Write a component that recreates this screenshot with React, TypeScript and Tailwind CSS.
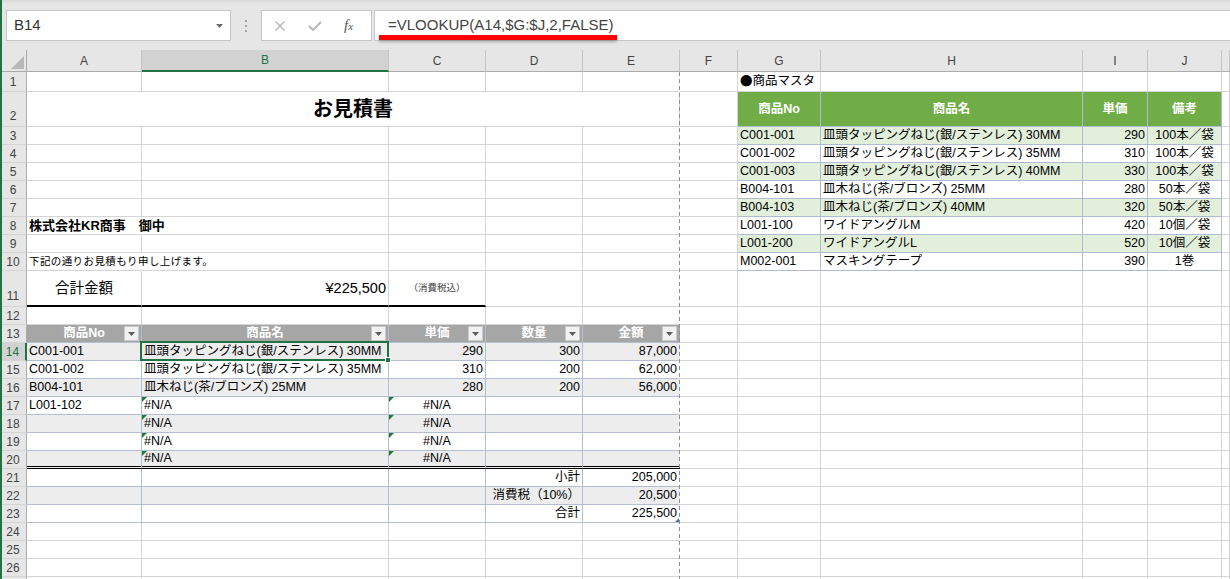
import type { ReactNode } from 'react'

const quoteHead = ['商品No', '商品名', '単価', '数量', '金額']
const quoteRows = [
  ['C001-001', '皿頭タッピングねじ(銀/ステンレス) 30MM', '290', '300', '87,000'],
  ['C001-002', '皿頭タッピングねじ(銀/ステンレス) 35MM', '310', '200', '62,000'],
  ['B004-101', '皿木ねじ(茶/ブロンズ) 25MM', '280', '200', '56,000'],
  ['L001-102', '#N/A', '#N/A', '', ''],
  ['', '#N/A', '#N/A', '', ''],
  ['', '#N/A', '#N/A', '', ''],
  ['', '#N/A', '#N/A', '', ''],
]
const totals = [
  ['小計', '205,000'],
  ['消費税（10%）', '20,500'],
  ['合計', '225,500'],
]
const masterHead = ['商品No', '商品名', '単価', '備考']
const masterRows = [
  ['C001-001', '皿頭タッピングねじ(銀/ステンレス) 30MM', '290', '100本／袋'],
  ['C001-002', '皿頭タッピングねじ(銀/ステンレス) 35MM', '310', '100本／袋'],
  ['C001-003', '皿頭タッピングねじ(銀/ステンレス) 40MM', '330', '100本／袋'],
  ['B004-101', '皿木ねじ(茶/ブロンズ) 25MM', '280', '50本／袋'],
  ['B004-103', '皿木ねじ(茶/ブロンズ) 40MM', '320', '50本／袋'],
  ['L001-100', 'ワイドアングルM', '420', '10個／袋'],
  ['L001-200', 'ワイドアングルL', '520', '10個／袋'],
  ['M002-001', 'マスキングテープ', '390', '1巻'],
]
const letters = ['A', 'B', 'C', 'D', 'E', 'F', 'G', 'H', 'I', 'J', '']

const rowHeight = (r: number) =>
  r === 1 ? 'h-[20px]' : r === 2 ? 'h-[35px]' : r === 11 ? 'h-[36px]' : 'h-[18px]'

type Spec = {
  text?: ReactNode
  cls: string
  extra?: ReactNode
  skip?: boolean
}

function ErrorMark() {
  return (
    <svg className="absolute left-0 top-0" width="5" height="5">
      <polygon points="0,0 5,0 0,5" fill="#1f7a3a" />
    </svg>
  )
}

function FilterButton() {
  return (
    <div className="absolute right-[2px] top-[1px] flex h-[15px] w-[15px] items-center justify-center border border-[#c9c9c9] bg-[#f2f2f2]">
      <svg width="7" height="4">
        <polygon points="0,0 7,0 3.5,4" fill="#5f5f5f" />
      </svg>
    </div>
  )
}

function Selection() {
  return (
    <div className="absolute -left-[2px] -top-[2px] -right-[1px] -bottom-[1px] z-10 border-2 border-[#217346]">
      <div className="absolute -right-[4px] -bottom-[4px] h-[6px] w-[6px] border border-white bg-[#217346]" />
    </div>
  )
}

function spec(r: number, c: number): Spec {
  let color = 'border-[#d4d4d4]'
  let bw = 'border-b'
  let extraCls = ''
  let bg = ''
  let align = 'justify-start'
  let font = ''
  let text: ReactNode = null
  let extra: ReactNode = null
  let span = ''

  if (r === 2 && c >= 1 && c <= 4) return { cls: '', skip: true }

  if (r === 1 && c === 6)
    text = (
      <>
        <span className="[font-family:'Noto_Sans_CJK_JP',sans-serif]">●</span>商品マスタ
      </>
    )
  if (r === 2 && c === 0) {
    span = 'col-span-5'
    text = 'お見積書'
    font = 'text-[20px] font-bold'
    align = 'justify-center'
  }
  if (r === 8 && c === 0) {
    text = '株式会社KR商事　御中'
    font = 'text-[13px] font-bold'
    extraCls += ' border-r-transparent'
  }
  if (r === 10 && c === 0) {
    text = '下記の通りお見積もり申し上げます。'
    font = 'text-[10.5px] tracking-[0.4px]'
    extraCls += ' border-r-transparent'
  }
  if (r === 11 && c <= 2) {
    bw = 'border-b-2'
    extraCls += ' border-b-black'
    if (c === 0) {
      text = '合計金額'
      font = 'text-[14.5px]'
      align = 'justify-center'
    }
    if (c === 1) {
      text = '¥225,500'
      font = 'text-[14.5px]'
      align = 'justify-end'
    }
    if (c === 2) {
      text = '（消費税込）'
      font = 'text-[9.5px] text-[#444]'
      align = 'justify-center'
    }
  }

  // quotation table
  if (r >= 13 && r <= 23 && c <= 4) {
    color = 'border-[#b3bfd1]'
    if (r === 13) {
      bg = 'bg-[#a6a6a6]'
      font = 'font-bold text-white'
      align = 'justify-center'
      text = quoteHead[c]
      extra = <FilterButton />
    } else if (r <= 20) {
      const v = quoteRows[r - 14][c]
      text = v
      if (r % 2 === 0) bg = 'bg-[#ededed]'
      if (c >= 2) align = v === '#N/A' ? 'justify-center' : 'justify-end'
      if (v === '#N/A') extra = <ErrorMark />
      if (r === 14 && c === 1) extra = <Selection />
      if (r === 20) {
        bw = 'border-b-[3px]'
        extraCls += ' border-double border-b-black'
      }
    } else {
      if (r === 22) bg = 'bg-[#ededed]'
      if (c >= 3) {
        text = totals[r - 21][c - 3]
        align = 'justify-end'
      }
      if (r === 23 && c === 4)
        extra = (
          <svg className="absolute right-0 bottom-0" width="4" height="4">
            <polygon points="4,0 4,4 0,4" fill="#4a6fc0" />
          </svg>
        )
    }
  }

  // product master
  if (r >= 2 && r <= 10 && c >= 6 && c <= 9) {
    color = 'border-[#aebbd0]'
    if (r === 2) {
      bg = 'bg-[#70ad47]'
      font = 'font-bold text-white'
      align = 'justify-center'
      text = masterHead[c - 6]
    } else {
      if (r % 2 === 1) bg = 'bg-[#e2efda]'
      text = masterRows[r - 3][c - 6]
      if (c === 8) align = 'justify-end'
      if (c === 9) align = 'justify-center'
    }
  }

  // page break line sits on the E/F boundary
  if (c === 4) extraCls += ' border-r-transparent'

  return {
    text,
    extra,
    cls: `${span} border-r ${bw} ${color} ${bg} ${align} ${font} ${extraCls}`,
  }
}

function FormulaBar() {
  return (
    <div className="relative h-[50px] bg-[linear-gradient(#d9d9d9,#e6e6e6_4px)]">
      <div className="flex items-start pt-[10px]">
        <div className="ml-[6px] flex h-[31px] w-[225px] items-center justify-between border border-[#c6c6c6] bg-white pl-[7px] pr-[7px]">
          <span className="text-[15px] text-[#333]">B14</span>
          <svg width="7" height="4">
            <polygon points="0,0 7,0 3.5,4" fill="#6d6d6d" />
          </svg>
        </div>
        <div className="flex h-[31px] w-[30px] flex-col items-center justify-center gap-[3px]">
          <span className="h-[2px] w-[2px] bg-[#a3a3a3]" />
          <span className="h-[2px] w-[2px] bg-[#a3a3a3]" />
          <span className="h-[2px] w-[2px] bg-[#a3a3a3]" />
        </div>
        <div className="flex h-[31px] w-[111px] items-center border border-[#c6c6c6] bg-white">
          <svg className="ml-[13px]" width="10" height="10">
            <path d="M0.5 0.5 L9.5 9.5 M9.5 0.5 L0.5 9.5" stroke="#b5b5b5" strokeWidth="1.3" />
          </svg>
          <svg className="ml-[23px]" width="14" height="10">
            <polyline points="1,5 5,9 13,1" fill="none" stroke="#b5b5b5" strokeWidth="1.8" />
          </svg>
          <span className="ml-[22px] text-[15px] italic text-[#555] [font-family:'Liberation_Serif',serif]">
            f<span className="text-[11px]">x</span>
          </span>
        </div>
        <div className="ml-[2px] flex h-[31px] flex-1 items-center border border-r-0 border-[#c6c6c6] bg-white pl-[13px] text-[15px] text-[#444]">
          =VLOOKUP(A14,$G:$J,2,FALSE)
        </div>
      </div>
      <div className="absolute left-[379px] top-[35px] h-[5px] w-[238px] bg-[#ff0000] shadow-[0_2px_3px_rgba(0,0,0,0.25)]" />
    </div>
  )
}

function Row({ r }: { r: number }) {
  const h = rowHeight(r)
  const selected = r === 14
  const labelAlign = r === 2 || r === 11 ? 'items-end pb-[1px]' : 'items-center'
  return (
    <>
      <div
        className={`flex justify-center border-b border-b-[#d4d4d4] text-[12px] ${h} ${labelAlign} ${
          selected
            ? 'border-r-2 border-r-[#217346] bg-[#d2d2d2] text-[#217346]'
            : 'border-r border-r-[#ababab] bg-[#e6e6e6] text-[#444]'
        }`}
      >
        {r <= 26 ? r : ''}
      </div>
      {letters.map((_, c) => {
        const s = spec(r, c)
        if (s.skip) return null
        return (
          <div
            key={c}
            className={`relative flex items-center whitespace-nowrap px-[2px] leading-none ${h} ${s.cls}`}
          >
            {s.text}
            {s.extra}
          </div>
        )
      })}
    </>
  )
}

export default function App() {
  const rows = Array.from({ length: 27 }, (_, i) => i + 1)
  return (
    <div className="relative h-[579px] w-[1230px] overflow-hidden bg-white text-[12.5px] text-black [font-family:'Liberation_Sans','Noto_Sans_CJK_JP',sans-serif]">
      <div className="absolute left-0 top-0 bottom-0 z-30 w-[2px] bg-[#217346]" />
      <FormulaBar />
      <div className="relative grid grid-cols-[27px_115px_247px_97px_97px_97px_58px_83px_262px_65px_74px_1fr]">
        <div className="relative h-[22px] border-r border-b border-[#ababab] bg-[#e6e6e6]">
          <svg className="absolute right-[2px] bottom-[2px]" width="13" height="13">
            <polygon points="13,0 13,13 0,13" fill="#b7b7b7" />
          </svg>
        </div>
        {letters.map((l, c) => (
          <div
            key={l + c}
            className={`flex h-[22px] items-center justify-center border-r border-r-[#c4c4c4] text-[12px] ${
              c === 1
                ? 'border-b-2 border-b-[#217346] bg-[#d2d2d2] text-[#217346]'
                : 'border-b border-b-[#ababab] bg-[#e6e6e6] text-[#444]'
            }`}
          >
            {l}
          </div>
        ))}
        {rows.map((r) => (
          <Row key={r} r={r} />
        ))}
        <div className="absolute left-[679px] top-[22px] bottom-0 z-20 w-px bg-[repeating-linear-gradient(to_bottom,#8f8f8f_0px,#8f8f8f_4px,transparent_4px,transparent_7px)]" />
      </div>
    </div>
  )
}
